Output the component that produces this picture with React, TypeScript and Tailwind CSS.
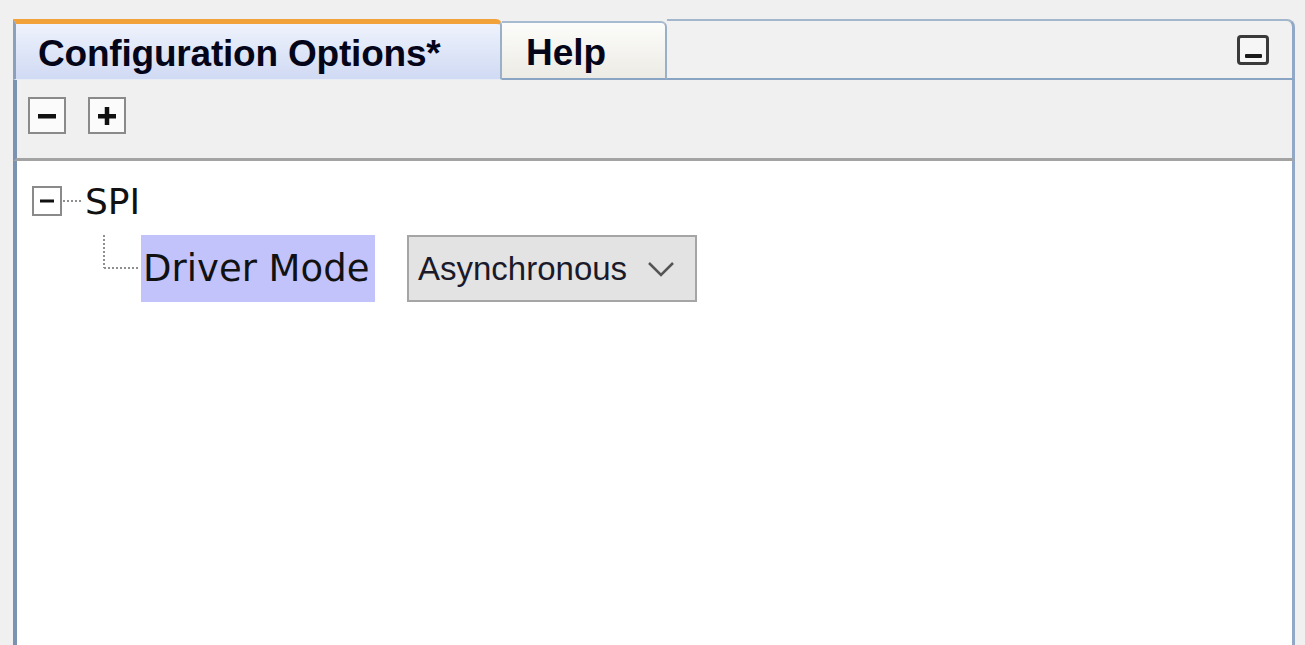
import React from "react";

function SquareBtn({ plus }: { plus?: boolean }) {
  return (
    <div className="w-[38px] h-[37px] border-[2px] border-[#8a8a8a] bg-[#fbfbfb] flex items-center justify-center">
      <svg width="24" height="24" viewBox="0 0 24 24">
        <rect x="3" y="10" width="18" height="4.5" fill="#111" />
        {plus && <rect x="9.75" y="3" width="4.5" height="18" fill="#111" />}
      </svg>
    </div>
  );
}

export default function App() {
  return (
    <div className="w-[1305px] h-[645px] bg-[#f0f0f0] overflow-hidden pt-[19px] pl-[13px] pr-[10px] flex flex-col">
      {/* tab row */}
      <div className="flex h-[61px] shrink-0">
        <div className="w-[489px] h-full border-t-[5px] border-t-[#f2a23a] border-l-[3px] border-l-[#8aa0bc] border-r-[2px] border-r-[#9ab0c8] rounded-tr-[6px] bg-gradient-to-b from-[#eef2fc] to-[#d0daf3] flex items-center pl-[22px] pt-[3px] border-b border-b-[#e8ecf5]">
          <span
            className="text-[37px] font-bold text-[#05051a] leading-none tracking-[-0.2px]"
            style={{ fontFamily: '"Liberation Sans", Arial, sans-serif' }}
          >
            Configuration Options*
          </span>
        </div>
        <div className="w-[165px] mt-[2px] h-[59px] border-t-[2px] border-t-[#a7bbd0] border-r-[2px] border-r-[#9ab0c8] rounded-tr-[6px] border-b-[2px] border-b-[#8aa5c3] bg-gradient-to-b from-[#fcfcfa] to-[#ecebe5] flex items-center pl-[24px] pt-[3px]">
          <span
            className="text-[37px] font-bold text-[#05051a] leading-none"
            style={{ fontFamily: '"Liberation Sans", Arial, sans-serif' }}
          >
            Help
          </span>
        </div>
        <div className="flex-1 h-full border-t-[2px] border-t-[#a2b6cc] border-r-[3px] border-r-[#91a9c6] rounded-tr-[8px] border-b-[2px] border-b-[#8aa5c3] bg-[#f1f1f1] flex items-center justify-end pr-[23px]">
          <div className="w-[32px] h-[30px] rounded-[4px] border-[3px] border-[#3a3a3a] bg-[#f6f6f6] flex items-end justify-center pb-[4px]">
            <div className="w-[17px] h-[4px] bg-[#1a1a1a] rounded-[1px]" />
          </div>
        </div>
      </div>

      {/* toolbar */}
      <div className="h-[81px] shrink-0 bg-[#f0f0f0] border-l-[4px] border-l-[#7b93b2] border-r-[3px] border-r-[#91a9c6] border-b-[3px] border-b-[#a3a3a3] flex items-start gap-[22px] pt-[17px] pl-[11px]">
        <SquareBtn />
        <SquareBtn plus />
      </div>

      {/* content */}
      <div
        className="flex-1 bg-white border-l-[4px] border-l-[#7b93b2] border-r-[3px] border-r-[#91a9c6] flex flex-col"
        style={{ fontFamily: '"DejaVu Sans", Verdana, sans-serif' }}
      >
        {/* SPI row */}
        <div className="flex items-center mt-[24px] ml-[15px] h-[32px]">
          <div className="w-[30px] h-[30px] border-[2px] border-[#8a8a8a] bg-white flex items-center justify-center">
            <svg width="20" height="20" viewBox="0 0 20 20">
              <rect x="3" y="8.5" width="14" height="3" fill="#111" />
            </svg>
          </div>
          <svg width="20" height="4" viewBox="0 0 20 4" className="mx-[1px]">
            <line x1="0" y1="2" x2="20" y2="2" stroke="#8f8f8f" strokeWidth="2" strokeDasharray="2 2" />
          </svg>
          <span className="text-[36px] leading-none text-[#111] ml-[1px] pt-[2px]">SPI</span>
        </div>

        {/* Driver Mode row */}
        <div className="flex items-start mt-[18px] ml-[84px] h-[67px]">
          <svg width="40" height="67" viewBox="0 0 40 67">
            <line x1="3" y1="0" x2="3" y2="33" stroke="#8f8f8f" strokeWidth="2" strokeDasharray="2 2" />
            <line x1="3" y1="33" x2="38" y2="33" stroke="#8f8f8f" strokeWidth="2" strokeDasharray="2 2" />
          </svg>
          <div className="h-[67px] w-[234px] bg-[#c3c3fb] flex items-center pl-[2px]">
            <span className="text-[37px] leading-none text-[#111]">Driver Mode</span>
          </div>
          <div className="ml-[32px] h-[67px] w-[290px] bg-[#e3e3e3] border-[2px] border-[#a5a5a5] flex items-center pl-[9px]">
            <span
              className="text-[33px] leading-none text-[#1a1a2a]"
              style={{ fontFamily: '"Liberation Sans", Arial, sans-serif' }}
            >
              Asynchronous
            </span>
            <svg width="28" height="18" viewBox="0 0 28 18" className="ml-[20px]">
              <polyline points="2,3 14,15 26,3" fill="none" stroke="#555" strokeWidth="2.5" />
            </svg>
          </div>
        </div>
      </div>
    </div>
  );
}
